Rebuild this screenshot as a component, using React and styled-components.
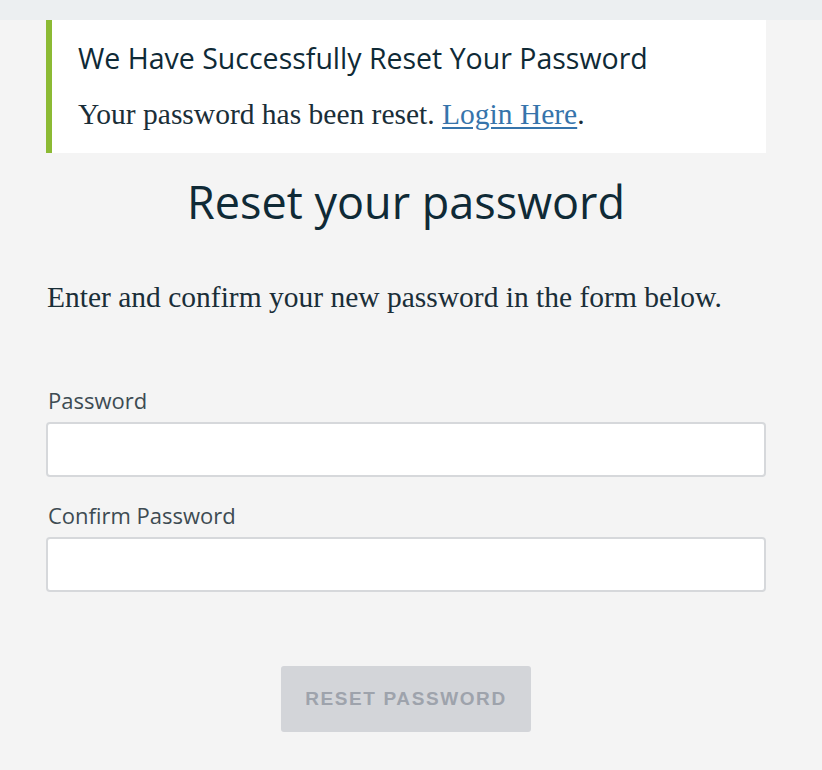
import React from 'react';
import styled, { createGlobalStyle } from 'styled-components';

const GlobalStyle = createGlobalStyle`
  html, body {
    margin: 0;
    padding: 0;
    background: #f4f4f4;
  }
`;

const TopBar = styled.div`
  height: 20px;
  background: #eceff1;
`;

const Page = styled.main`
  width: 720px;
  margin-left: 46px;
  color: #0f2a36;
`;

const Alert = styled.div`
  background: #fff;
  border-left: 6px solid #8cba34;
  padding: 20px 26px 21px;
`;

const AlertTitle = styled.h4`
  margin: 0;
  font-family: 'Open Sans', Lato, sans-serif;
  font-weight: 400;
  font-size: 28.5px;
  line-height: 36px;
  color: #0f2a36;
`;

const Serif = styled.p`
  margin: ${p => p.$margin || '0'};
  font-family: 'Liberation Serif', 'DejaVu Serif', serif;
  font-size: 29.5px;
  line-height: 36px;
  color: #1a2e38;
`;

const TextLink = styled.a`
  color: #3674ab;
  text-decoration: underline;
  text-underline-offset: 3px;
`;

const Heading = styled.h1`
  margin: 21px 0 0;
  text-align: center;
  font-family: 'Open Sans', Lato, sans-serif;
  font-weight: 400;
  font-size: 45px;
  line-height: 56px;
  color: #0f2a36;
`;

const Form = styled.form`
  display: flex;
  flex-direction: column;
  margin-top: 73px;
`;

const Field = styled.div`
  display: flex;
  flex-direction: column;
  gap: 10px;
  margin-bottom: 26px;
`;

const Label = styled.label`
  padding-left: 2px;
  font-family: 'Open Sans', Lato, sans-serif;
  font-size: 22px;
  line-height: 24px;
  color: #3d4b52;
`;

const Input = styled.input`
  box-sizing: border-box;
  width: 100%;
  height: 55px;
  border: 2px solid #d6d8db;
  border-radius: 4px;
  background: #fff;
  font-size: 18px;
  padding: 0 14px;
  outline: none;
`;

const Actions = styled.div`
  display: flex;
  justify-content: center;
  margin-top: 48px;
`;

const Button = styled.button`
  width: 250px;
  height: 66px;
  border: none;
  border-radius: 3px;
  background: #d3d5d9;
  color: #9ea3ac;
  font-family: 'Liberation Sans', Arial, sans-serif;
  font-weight: 700;
  font-size: 19px;
  letter-spacing: 1.6px;
  text-transform: uppercase;
  cursor: default;
`;

export default function App() {
  return (
    <>
      <GlobalStyle />
      <TopBar />
      <Page>
        <Alert>
          <AlertTitle>We Have Successfully Reset Your Password</AlertTitle>
          <Serif $margin="20px 0 0">
            Your password has been reset. <TextLink href="#">Login Here</TextLink>.
          </Serif>
        </Alert>
        <Heading>Reset your password</Heading>
        <Serif $margin="49px 0 0 1px">Enter and confirm your new password in the form below.</Serif>
        <Form onSubmit={e => e.preventDefault()}>
          <Field>
            <Label htmlFor="pw">Password</Label>
            <Input id="pw" type="password" />
          </Field>
          <Field>
            <Label htmlFor="pw2">Confirm Password</Label>
            <Input id="pw2" type="password" />
          </Field>
          <Actions>
            <Button type="submit" disabled>Reset Password</Button>
          </Actions>
        </Form>
      </Page>
    </>
  );
}
